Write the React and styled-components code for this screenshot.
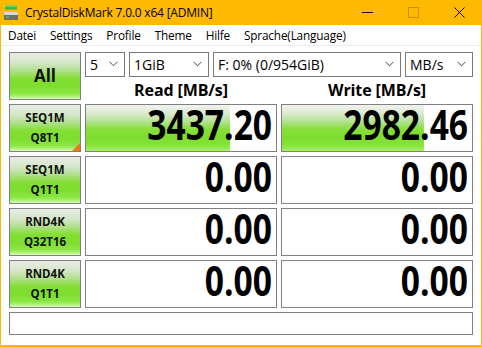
import React from "react";
import styled, { createGlobalStyle } from "styled-components";

const GlobalStyle = createGlobalStyle`
  html, body { margin: 0; padding: 0; background: #fff; overflow: hidden; }
  * { box-sizing: border-box; }
`;

const ACCENT = "#ffb900";
const UI_FONT = `"Open Sans", "Noto Sans", sans-serif`;

const Window = styled.div`
  width: 482px;
  height: 347px;
  display: flex;
  flex-direction: column;
  font-family: ${UI_FONT};
  color: #000;
`;

const TitleBar = styled.div`
  height: 25px;
  background: ${ACCENT};
  display: flex;
  align-items: center;
  flex-shrink: 0;
`;

const AppIcon = styled.svg`
  width: 16px;
  height: 16px;
  margin-left: 3px;
  margin-right: 6px;
  flex-shrink: 0;
`;

const Title = styled.div`
  font-size: 12px;
  letter-spacing: -0.2px;
  flex: 1;
  white-space: nowrap;
`;

const Controls = styled.div`
  display: flex;
  height: 25px;
`;

const CtrlButton = styled.div`
  width: 46px;
  height: 25px;
  display: flex;
  align-items: center;
  justify-content: center;
`;

const Frame = styled.div`
  flex: 1;
  display: flex;
  flex-direction: column;
  border: 1px solid ${ACCENT};
  border-top: none;
  border-bottom-width: 2px;
`;

const MenuBar = styled.div`
  height: 21px;
  display: flex;
  align-items: center;
  border-bottom: 1px solid #ececec;
  flex-shrink: 0;
`;

const MenuItem = styled.div`
  padding: 0 7px;
  font-size: 11.8px;
  letter-spacing: -0.18px;
  line-height: 20px;
  white-space: nowrap;
`;

const Content = styled.div`
  flex: 1;
  padding: 6px 8px 8px 8px;
`;

const Grid = styled.div`
  display: grid;
  grid-template-columns: 72px 192px 192px;
  grid-template-rows: 25px 19px 48px 48px 48px 48px 23px;
  gap: 4px;
`;

const greenGradient = `linear-gradient(to bottom,
  #e9ece7 0%, #d3e6c6 22%, #addf86 40%, #84df35 55%, #7ddd2c 72%, #8be744 88%, #b9f284 96%, #e2f8cc 100%)`;

const TestButton = styled.div`
  grid-column: 1;
  grid-row: ${(p) => p.$row};
  border: 1px solid #808080;
  background: ${greenGradient};
  display: flex;
  flex-direction: column;
  align-items: center;
  justify-content: center;
  font-weight: 700;
  font-size: ${(p) => (p.$big ? "17px" : "11.5px")};
  line-height: 20px;
  color: #111;
  position: relative;
  ${(p) =>
    p.$marked &&
    `&::after {
      content: "";
      position: absolute;
      right: 0;
      bottom: 0;
      width: 0;
      height: 0;
      border-style: solid;
      border-width: 0 0 8px 8px;
      border-color: transparent transparent #f07818 transparent;
    }`}
`;

const SelectRow = styled.div`
  grid-column: 2 / span 2;
  grid-row: 1;
  display: flex;
  gap: 4px;
`;

const Select = styled.div`
  width: ${(p) => p.$w}px;
  height: 25px;
  border: 1px solid #7a7a7a;
  background: #fff;
  display: flex;
  align-items: center;
  justify-content: space-between;
  padding: 0 6px 1px 4px;
  font-size: 14px;
  white-space: nowrap;
`;

const Chevron = () => (
  <svg width="9" height="6" viewBox="0 0 9 6">
    <polyline points="0.5,0.8 4.5,4.8 8.5,0.8" fill="none" stroke="#4a4a4a" strokeWidth="1" />
  </svg>
);

const Header = styled.div`
  grid-row: 2;
  grid-column: ${(p) => p.$col};
  text-align: center;
  font-weight: 700;
  font-size: 16px;
  line-height: 19px;
  letter-spacing: -0.1px;
`;

const barGradient = `linear-gradient(to bottom,
  #f1f3ef 0%, #dcebd1 18%, #b4e192 36%, #87df3b 52%, #7ddd2d 70%, #85e33a 88%, #a9ee6c 100%)`;

const ValueBox = styled.div`
  grid-column: ${(p) => p.$col};
  grid-row: ${(p) => p.$row};
  border: 1px solid #808080;
  background-color: #fff;
  background-image: ${barGradient};
  background-repeat: no-repeat;
  background-size: ${(p) => p.$fill}% 100%;
  display: flex;
  align-items: center;
  justify-content: flex-end;
  padding: 0 4px 9px 0;
`;

const ValueText = styled.span`
  display: inline-block;
  font-weight: 700;
  font-size: 42px;
  line-height: 32px;
  transform: scaleX(0.8);
  transform-origin: right center;
  color: #000;
`;

const StatusBar = styled.div`
  grid-column: 1 / -1;
  grid-row: 7;
  border: 1px solid #808080;
  background: #fff;
`;

const tests = [
  { l1: "SEQ1M", l2: "Q8T1", read: "3437.20", write: "2982.46", rf: 75.8, wf: 74.7, marked: true },
  { l1: "SEQ1M", l2: "Q1T1", read: "0.00", write: "0.00", rf: 0, wf: 0 },
  { l1: "RND4K", l2: "Q32T16", read: "0.00", write: "0.00", rf: 0, wf: 0 },
  { l1: "RND4K", l2: "Q1T1", read: "0.00", write: "0.00", rf: 0, wf: 0 },
];

export default function App() {
  return (
    <>
      <GlobalStyle />
      <Window>
        <TitleBar>
          <AppIcon viewBox="0 0 16 16">
            <rect x="2" y="0.5" width="12" height="4" fill="#3cb83c" />
            <rect x="2" y="0.5" width="12" height="1.2" fill="#7ee07e" />
            <rect x="1" y="7" width="14" height="8" rx="1" fill="#8a8a8a" />
            <rect x="1" y="7" width="14" height="3" rx="1" fill="#d8d8d8" />
            <rect x="1" y="10" width="14" height="5" fill="#6e6e6e" />
            <rect x="3" y="11.5" width="3" height="1.6" fill="#4ed04e" />
          </AppIcon>
          <Title>CrystalDiskMark 7.0.0 x64 [ADMIN]</Title>
          <Controls>
            <CtrlButton>
              <svg width="11" height="11" viewBox="0 0 11 11">
                <line x1="0" y1="5.5" x2="11" y2="5.5" stroke="#000" strokeWidth="1" />
              </svg>
            </CtrlButton>
            <CtrlButton>
              <svg width="11" height="11" viewBox="0 0 11 11">
                <rect x="0.5" y="0.5" width="10" height="10" fill="none" stroke="rgba(0,0,0,0.22)" strokeWidth="1" />
              </svg>
            </CtrlButton>
            <CtrlButton>
              <svg width="11" height="11" viewBox="0 0 11 11">
                <line x1="0.5" y1="0.5" x2="10.5" y2="10.5" stroke="#000" strokeWidth="1" />
                <line x1="10.5" y1="0.5" x2="0.5" y2="10.5" stroke="#000" strokeWidth="1" />
              </svg>
            </CtrlButton>
          </Controls>
        </TitleBar>
        <Frame>
          <MenuBar>
            <MenuItem>Datei</MenuItem>
            <MenuItem>Settings</MenuItem>
            <MenuItem>Profile</MenuItem>
            <MenuItem>Theme</MenuItem>
            <MenuItem>Hilfe</MenuItem>
            <MenuItem>Sprache(Language)</MenuItem>
          </MenuBar>
          <Content>
            <Grid>
              <TestButton $row="1 / span 2" $big>All</TestButton>
              <SelectRow>
                <Select $w={40}><span>5</span><Chevron /></Select>
                <Select $w={80}><span>1GiB</span><Chevron /></Select>
                <Select $w={188}><span>F: 0% (0/954GiB)</span><Chevron /></Select>
                <Select $w={68}><span>MB/s</span><Chevron /></Select>
              </SelectRow>
              <Header $col={2}>Read [MB/s]</Header>
              <Header $col={3}>Write [MB/s]</Header>
              {tests.map((t, i) => (
                <React.Fragment key={i}>
                  <TestButton $row={i + 3} $marked={t.marked}>
                    <span>{t.l1}</span>
                    <span>{t.l2}</span>
                  </TestButton>
                  <ValueBox $col={2} $row={i + 3} $fill={t.rf}>
                    <ValueText>{t.read}</ValueText>
                  </ValueBox>
                  <ValueBox $col={3} $row={i + 3} $fill={t.wf}>
                    <ValueText>{t.write}</ValueText>
                  </ValueBox>
                </React.Fragment>
              ))}
              <StatusBar />
            </Grid>
          </Content>
        </Frame>
      </Window>
    </>
  );
}
